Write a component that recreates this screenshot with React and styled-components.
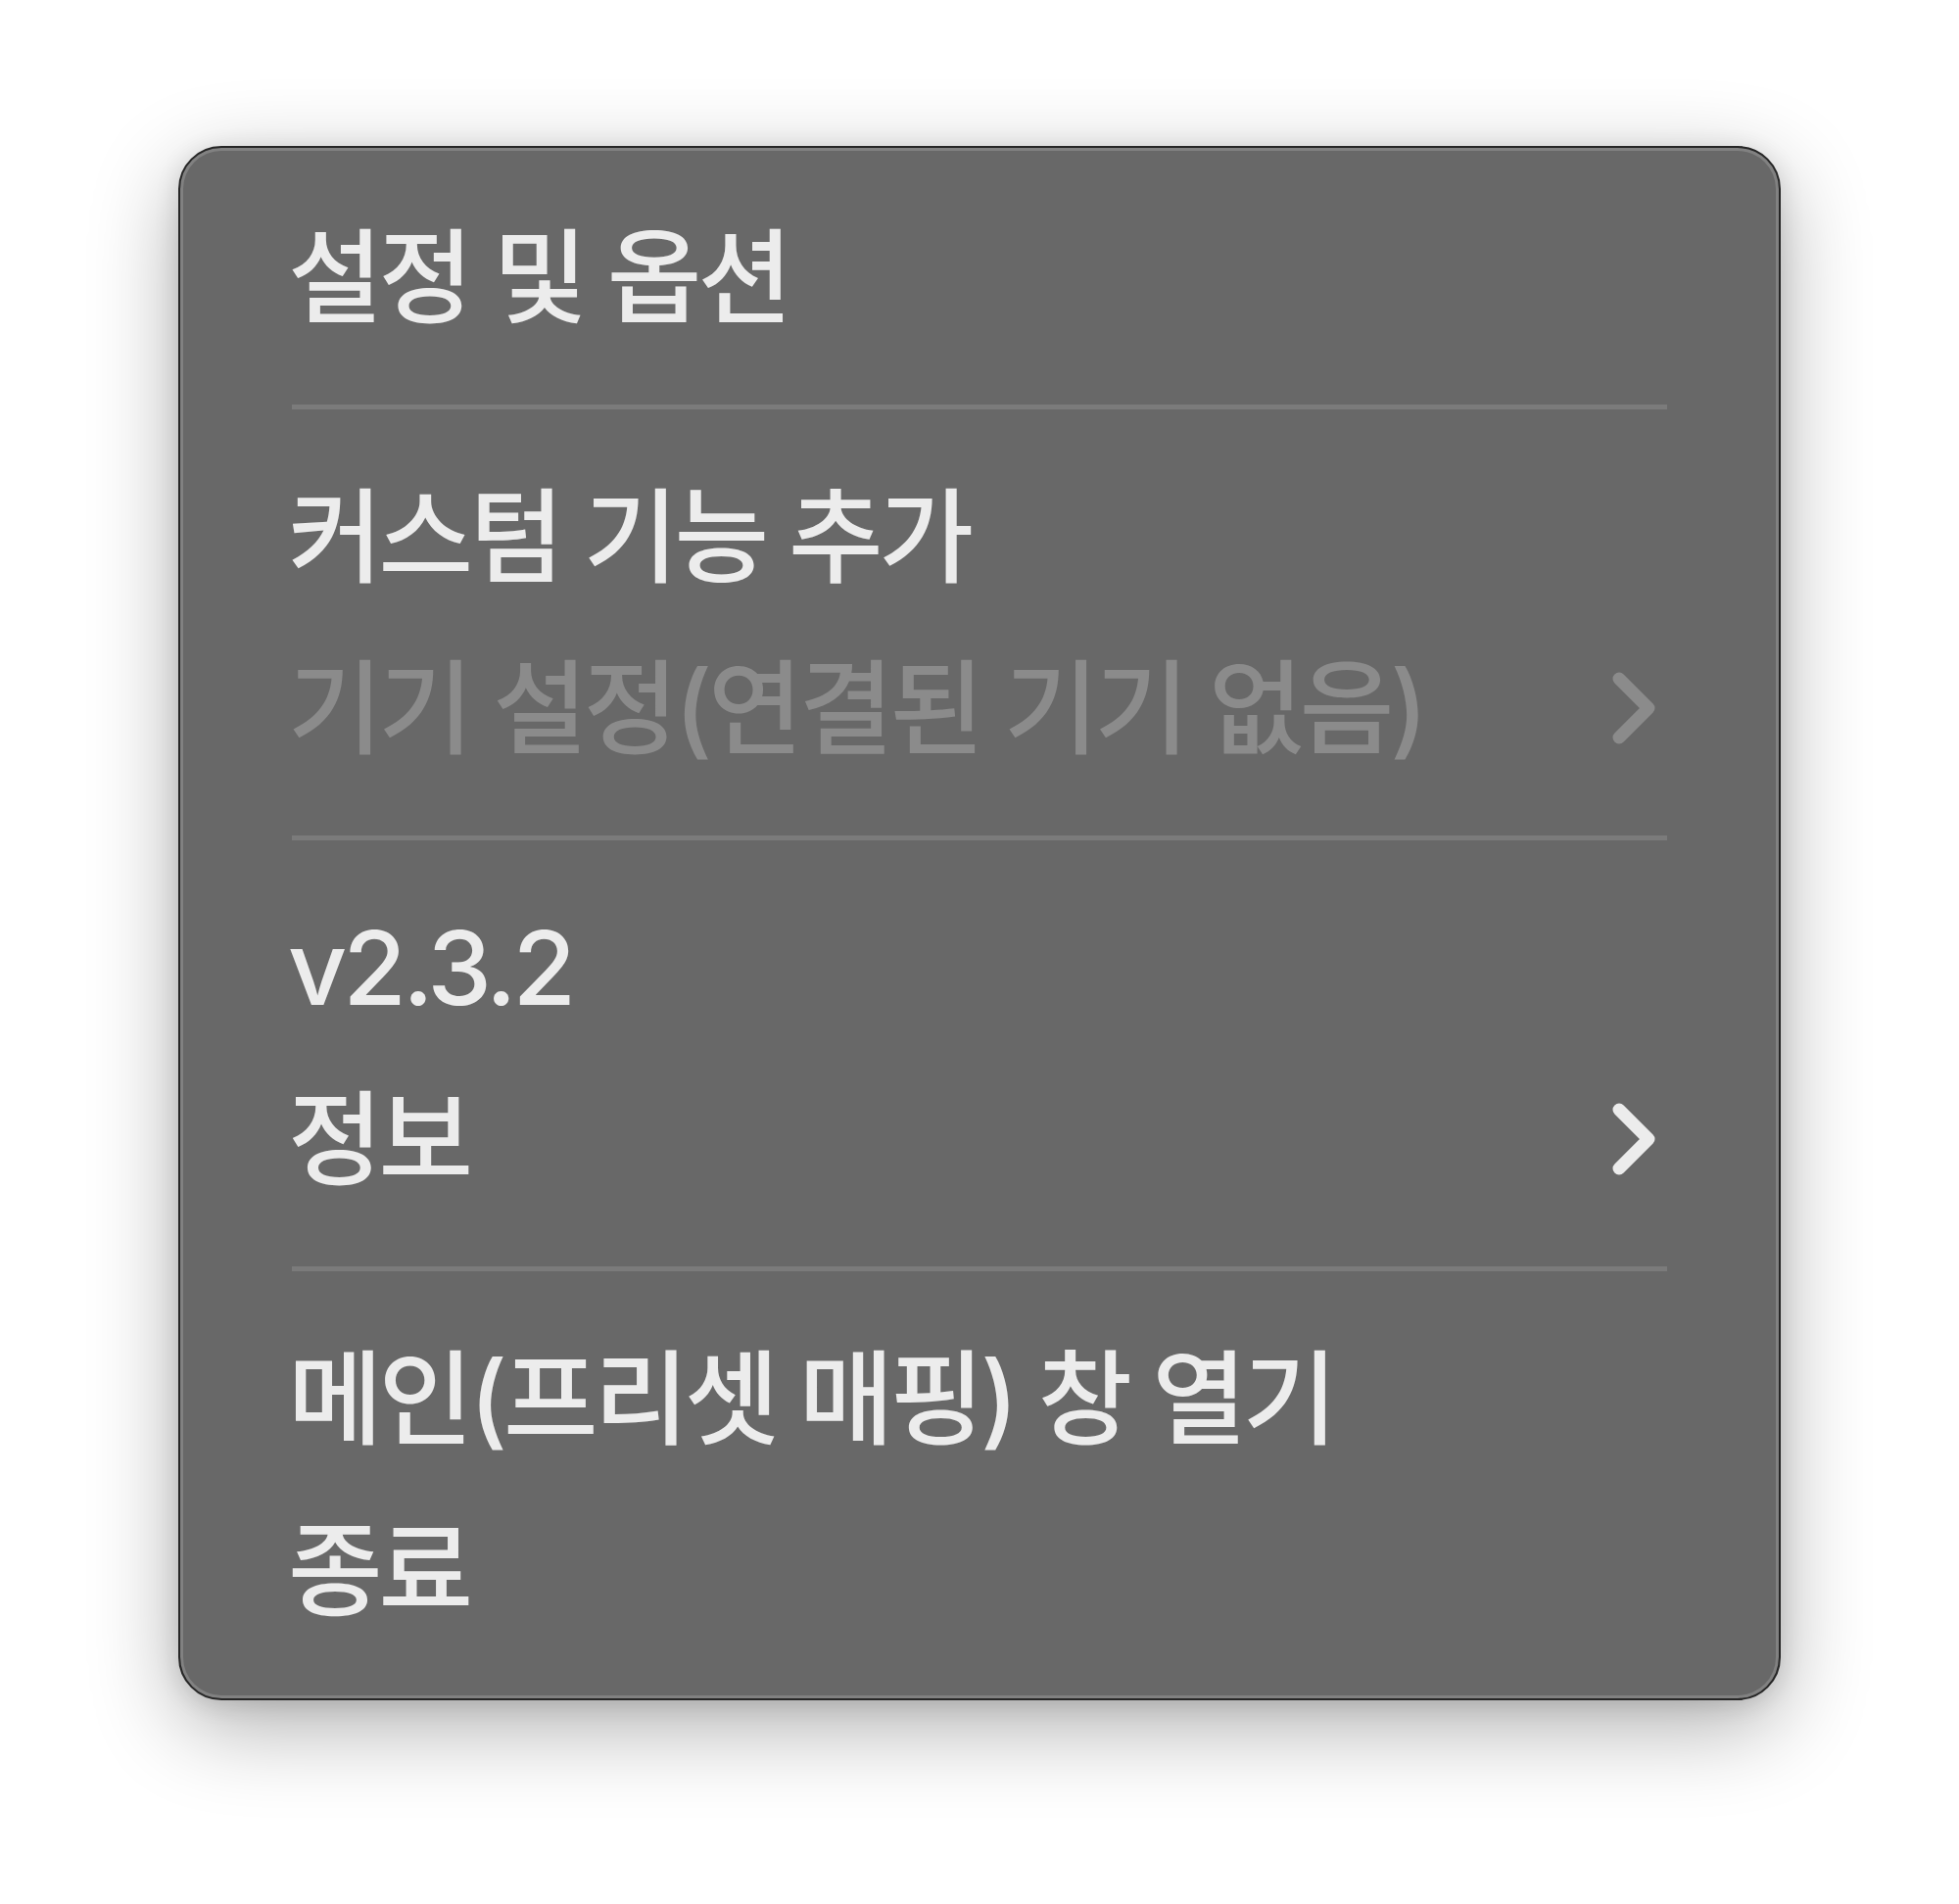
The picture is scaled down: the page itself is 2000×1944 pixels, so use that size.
import React from 'react'
import styled, { createGlobalStyle } from 'styled-components'

const GlobalStyle = createGlobalStyle`
    html, body {
        margin: 0;
        padding: 0;
        background: #ffffff;
    }
`;

const Page = styled.div`
    width: 2000px;
    height: 1944px;
    display: flex;
    justify-content: center;
    align-items: flex-start;
    padding-top: 149px;
    box-sizing: border-box;
    background: #ffffff;
`;

const Menu = styled.div`
    width: 1636px;
    box-sizing: border-box;
    padding: 44px 114px 44px 110px;
    background: #686868;
    border: 2px solid #262626;
    border-radius: 44px;
    box-shadow:
        inset 0 0 0 3px rgba(255, 255, 255, 0.17),
        0 26px 90px rgba(0, 0, 0, 0.32),
        0 4px 24px rgba(0, 0, 0, 0.12);
    font-family: Inter, "Noto Sans CJK KR", sans-serif;
    display: flex;
    flex-direction: column;
`;

const Item = styled.div`
    height: 175px;
    display: flex;
    align-items: center;
    justify-content: space-between;
    font-size: 105px;
    font-weight: 500;
    letter-spacing: -4px;
    color: ${({ disabled }) => (disabled ? '#8b8b8b' : '#ececec')};
    white-space: nowrap;
`;

const Label = styled.span`
    line-height: 1;
`;

const Separator = styled.div`
    height: 90px;
    display: flex;
    align-items: center;
    padding-left: 4px;

    &::after {
        content: '';
        flex: 1;
        height: 5px;
        background: #7b7b7b;
    }
`;

const Chevron = styled.svg`
    width: 47px;
    height: 76px;
    margin-right: 10px;
    flex-shrink: 0;
`;

const Arrow = ({ color }) => (
    <Chevron viewBox="0 0 47 76">
        <path
            d="M8 8 L38 38 L8 68"
            fill="none"
            stroke={color}
            strokeWidth="13"
            strokeLinecap="round"
            strokeLinejoin="round"
        />
    </Chevron>
);

const App = () => {
    return (
        <Page>
            <GlobalStyle />
            <Menu>
                <Item><Label>설정 및 옵션</Label></Item>
                <Separator />
                <Item><Label>커스텀 기능 추가</Label></Item>
                <Item disabled>
                    <Label>기기 설정(연결된 기기 없음)</Label>
                    <Arrow color="#8b8b8b" />
                </Item>
                <Separator />
                <Item><Label>v2.3.2</Label></Item>
                <Item>
                    <Label>정보</Label>
                    <Arrow color="#ececec" />
                </Item>
                <Separator />
                <Item><Label>메인(프리셋 매핑) 창 열기</Label></Item>
                <Item><Label>종료</Label></Item>
            </Menu>
        </Page>
    )
}

export default App;
